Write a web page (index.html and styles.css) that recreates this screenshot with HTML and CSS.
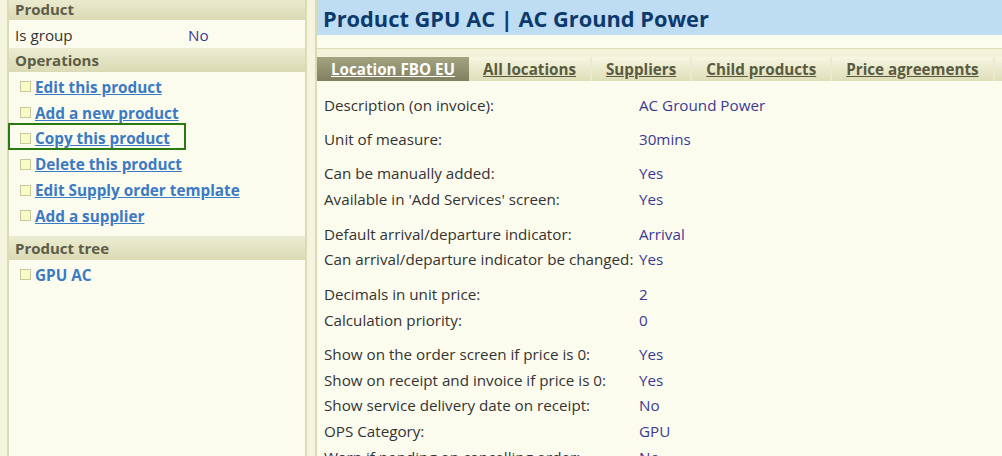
FILE: index.html
```html
<!DOCTYPE html>
<html lang="en">
  <head>
    <meta charset="UTF-8" />
    <meta name="viewport" content="width=device-width, initial-scale=1.0" />
    <title>Product GPU AC</title>
    <link rel="stylesheet" href="styles.css">
  </head>
  <body>
    <div class="sidebar">
      <div class="side-header first">Product</div>
      <div class="side-row">
        <span class="side-label">Is group</span>
        <span class="side-value">No</span>
      </div>
      <div class="side-header">Operations</div>
      <ul class="op-list">
        <li><span class="box"></span><a href="#">Edit this product</a></li>
        <li><span class="box"></span><a href="#">Add a new product</a></li>
        <li class="marked"><span class="box"></span><a href="#">Copy this product</a><span class="mark"></span></li>
        <li><span class="box"></span><a href="#">Delete this product</a></li>
        <li><span class="box"></span><a href="#">Edit Supply order template</a></li>
        <li><span class="box"></span><a href="#">Add a supplier</a></li>
      </ul>
      <div class="side-header">Product tree</div>
      <ul class="op-list tree">
        <li><span class="box"></span><a href="#" class="plain">GPU AC</a></li>
      </ul>
    </div>

    <div class="main">
      <div class="title-bar">
        <h1>Product GPU AC | AC Ground Power</h1>
      </div>
      <div class="title-gap"></div>
      <div class="tab-strip">
        <div class="tabs">
          <a href="#" class="tab active">Location FBO EU</a>
          <a href="#" class="tab">All locations</a>
          <a href="#" class="tab">Suppliers</a>
          <a href="#" class="tab">Child products</a>
          <a href="#" class="tab">Price agreements</a>
        </div>
      </div>
      <div class="details">
        <div class="group">
          <div class="row"><span class="label">Description (on invoice):</span><span class="value">AC Ground Power</span></div>
        </div>
        <div class="group">
          <div class="row"><span class="label">Unit of measure:</span><span class="value">30mins</span></div>
        </div>
        <div class="group">
          <div class="row"><span class="label">Can be manually added:</span><span class="value">Yes</span></div>
          <div class="row"><span class="label">Available in 'Add Services' screen:</span><span class="value">Yes</span></div>
        </div>
        <div class="group">
          <div class="row"><span class="label">Default arrival/departure indicator:</span><span class="value">Arrival</span></div>
          <div class="row"><span class="label">Can arrival/departure indicator be changed:</span><span class="value">Yes</span></div>
        </div>
        <div class="group">
          <div class="row"><span class="label">Decimals in unit price:</span><span class="value">2</span></div>
          <div class="row"><span class="label">Calculation priority:</span><span class="value">0</span></div>
        </div>
        <div class="group">
          <div class="row"><span class="label">Show on the order screen if price is 0:</span><span class="value">Yes</span></div>
          <div class="row"><span class="label">Show on receipt and invoice if price is 0:</span><span class="value">Yes</span></div>
          <div class="row"><span class="label">Show service delivery date on receipt:</span><span class="value">No</span></div>
          <div class="row"><span class="label">OPS Category:</span><span class="value">GPU</span></div>
          <div class="row"><span class="label">Warn if pending on cancelling order:</span><span class="value">No</span></div>
        </div>
      </div>
    </div>
  </body>
</html>
```

FILE: styles.css
```css
body {
  margin: 0;
  background-color: #f5f5df;
  font-family: "Open Sans", "Noto Sans", sans-serif;
  font-size: 15.2px;
  color: #333;
  display: flex;
  height: 456px;
  overflow: hidden;
}

a {
  text-decoration: underline;
}

/* left column */
.sidebar {
  width: 296px;
  margin-left: 7px;
  margin-top: -2px;
  background-color: #fcfcee;
  border-left: 2px solid #dcdcb4;
  border-right: 2px solid #dcdcb4;
  flex-shrink: 0;
}

.side-header {
  height: 24px;
  line-height: 24px;
  padding-left: 6px;
  font-weight: bold;
  font-size: 15px;
  color: #5c5c48;
  background: linear-gradient(#ececd2, #dadab4);
}

.side-header.first {
  height: 22px;
  line-height: 22px;
}

.side-row {
  display: flex;
  height: 28px;
  line-height: 30px;
  padding-left: 6px;
}

.side-label {
  width: 173px;
}

.side-value {
  color: #3a3a94;
}

.op-list {
  list-style: none;
  margin: 0;
  padding: 2px 0 7px 0;
}

.op-list li {
  position: relative;
  display: flex;
  align-items: center;
  height: 25.8px;
  padding-left: 11px;
}

.op-list a {
  color: #3b7ac4;
  font-weight: bold;
  font-size: 15.3px;
}

.op-list a.plain {
  text-decoration: none;
}

.tree {
  padding-top: 2px;
}

.box {
  width: 9px;
  height: 9px;
  margin-right: 4px;
  background-color: #fafac4;
  border: 1px solid #c8c8a0;
  flex-shrink: 0;
}

.mark {
  position: absolute;
  left: -1px;
  top: -3px;
  width: 174px;
  height: 23px;
  border: 2.5px solid #2a7a12;
}

/* right column */
.main {
  flex: 1;
  margin-left: 8px;
  border-left: 2px solid #dcdcb4;
  background-color: #fcfcee;
  min-width: 0;
}

.title-bar {
  height: 35px;
  background-color: #bedcf2;
  padding-left: 6px;
}

.title-bar h1 {
  margin: 0;
  font-size: 21.8px;
  line-height: 38px;
  color: #0c3a6c;
  font-weight: bold;
  white-space: nowrap;
}

.title-gap {
  height: 13px;
  border-bottom: 1px solid #dedeb8;
}

.tab-strip {
  background-color: #f3f3da;
  padding-top: 8px;
}

.tabs {
  display: flex;
  height: 24px;
  background: linear-gradient(#f6f6e2, #dedeb8);
  white-space: nowrap;
  overflow: hidden;
}

.tab {
  line-height: 24px;
  padding: 0 14px;
  font-weight: bold;
  font-size: 15.2px;
  color: #5a5a40;
  border-right: 2px solid #eaead0;
}

.tab.active {
  color: #fff;
  background: linear-gradient(#a4a482, #808060);
  border-right: none;
}

.details {
  padding: 11.5px 0 0 7px;
}

.group {
  margin-bottom: 8.8px;
}

.row {
  display: flex;
  height: 25.7px;
  line-height: 25.7px;
  white-space: nowrap;
}

.label {
  width: 315px;
  flex-shrink: 0;
}

.value {
  color: #3a3a94;
}
```
